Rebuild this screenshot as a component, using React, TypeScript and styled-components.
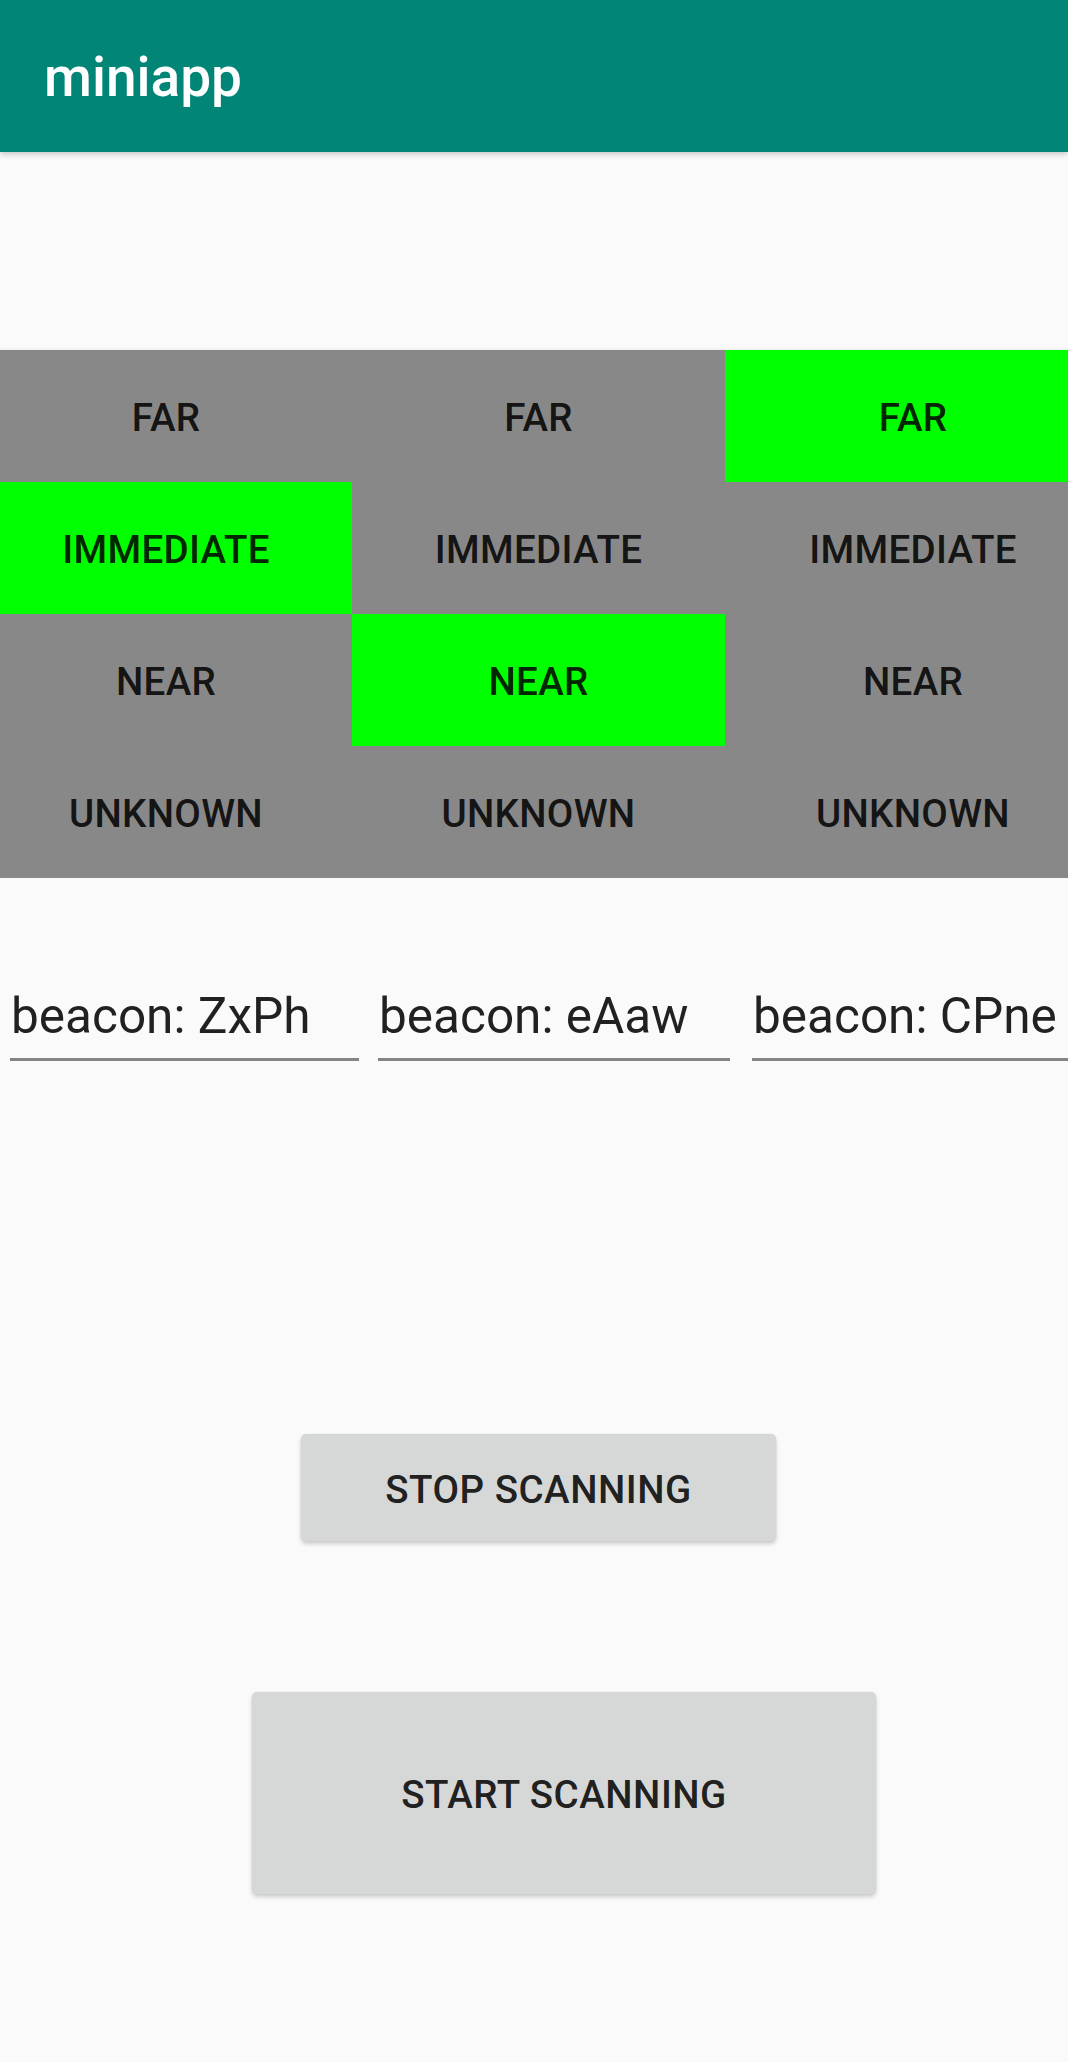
import React from "react";
import styled, { createGlobalStyle } from "styled-components";

const GlobalStyle = createGlobalStyle`
  html, body {
    margin: 0;
    padding: 0;
    background: #fafafa;
  }
  body {
    font-family: Roboto, "Noto Sans", "Liberation Sans", sans-serif;
  }
  * { box-sizing: border-box; }
`;

const Page = styled.div`
  width: 1068px;
  min-height: 2062px;
  background: #fafafa;
  overflow: hidden;
  display: flex;
  flex-direction: column;
`;

const Toolbar = styled.header`
  height: 152px;
  background: #008577;
  display: flex;
  align-items: center;
  padding-left: 44px;
  box-shadow: 0 2px 6px rgba(0, 0, 0, 0.22);
  position: relative;
  z-index: 2;
`;

const Title = styled.h1`
  margin: 0;
  font-family: Roboto, "Liberation Sans", sans-serif;
  font-weight: 500;
  font-size: 55px;
  line-height: 64px;
  color: #ffffff;
  padding-top: 1px;
`;

const Columns = styled.div`
  margin-top: 198px;
  margin-left: -20px;
  display: flex;
  align-items: flex-start;
  box-shadow: 0 -1px 2px rgba(0, 0, 0, 0.06);
`;

const Column = styled.div<{ $width: number }>`
  width: ${(p) => p.$width}px;
  flex: none;
  display: flex;
  flex-direction: column;
`;

const Cell = styled.div<{ $active: boolean }>`
  height: 132px;
  display: flex;
  align-items: center;
  justify-content: center;
  padding-top: 2px;
  background: ${(p) => (p.$active ? "#00ff00" : "#888888")};
  color: rgba(0, 0, 0, 0.87);
  font-family: Roboto, "Liberation Sans", sans-serif;
  font-weight: 500;
  font-size: 38.5px;
  letter-spacing: 0.3px;
  text-transform: uppercase;
`;

const Fields = styled.div`
  margin-top: 109px;
  display: flex;
  padding-left: 10px;
`;

const Field = styled.div<{ $width: number; $gap: number }>`
  width: ${(p) => p.$width}px;
  margin-left: ${(p) => p.$gap}px;
  flex: none;
  font-family: Roboto, "Liberation Sans", sans-serif;
  font-size: 49.5px;
  line-height: 58px;
  color: rgba(0, 0, 0, 0.87);
  padding-left: 1px;
  padding-bottom: 13px;
  border-bottom: 3px solid #858585;
  white-space: nowrap;
  overflow: hidden;
`;

const ButtonArea = styled.div`
  display: flex;
  flex-direction: column;
  align-items: flex-start;
`;

const ActionButton = styled.button<{ $left: number; $top: number; $w: number; $h: number }>`
  margin-left: ${(p) => p.$left}px;
  margin-top: ${(p) => p.$top}px;
  width: ${(p) => p.$w}px;
  height: ${(p) => p.$h}px;
  border: none;
  border-radius: 5px;
  background: #d6d7d7;
  box-shadow: 0 3px 4px rgba(0, 0, 0, 0.18), 0 0 2px rgba(0, 0, 0, 0.08);
  font-family: Roboto, "Liberation Sans", sans-serif;
  font-weight: 500;
  font-size: 38.5px;
  letter-spacing: 0.5px;
  color: rgba(0, 0, 0, 0.87);
  text-transform: uppercase;
  padding: 3px 0 0;
  display: flex;
  align-items: center;
  justify-content: center;
`;

const columns = [
  { width: 372, active: "IMMEDIATE", label: "ZxPh", fieldWidth: 349, gap: 0 },
  { width: 373, active: "NEAR", label: "eAaw", fieldWidth: 352, gap: 19 },
  { width: 376, active: "FAR", label: "CPne", fieldWidth: 340, gap: 22 },
];

const states = ["FAR", "IMMEDIATE", "NEAR", "UNKNOWN"];

export default function App() {
  return (
    <>
      <GlobalStyle />
      <Page>
        <Toolbar>
          <Title>miniapp</Title>
        </Toolbar>
        <Columns>
          {columns.map((c, i) => (
            <Column key={i} $width={c.width}>
              {states.map((s) => (
                <Cell key={s} $active={s === c.active}>
                  {s}
                </Cell>
              ))}
            </Column>
          ))}
        </Columns>
        <Fields>
          {columns.map((c, i) => (
            <Field key={i} $width={c.fieldWidth} $gap={c.gap}>
              beacon: {c.label}
            </Field>
          ))}
        </Fields>
        <ButtonArea>
          <ActionButton $left={301} $top={373} $w={475} $h={107}>
            Stop Scanning
          </ActionButton>
          <ActionButton $left={252} $top={151} $w={624} $h={202}>
            Start Scanning
          </ActionButton>
        </ButtonArea>
      </Page>
    </>
  );
}
